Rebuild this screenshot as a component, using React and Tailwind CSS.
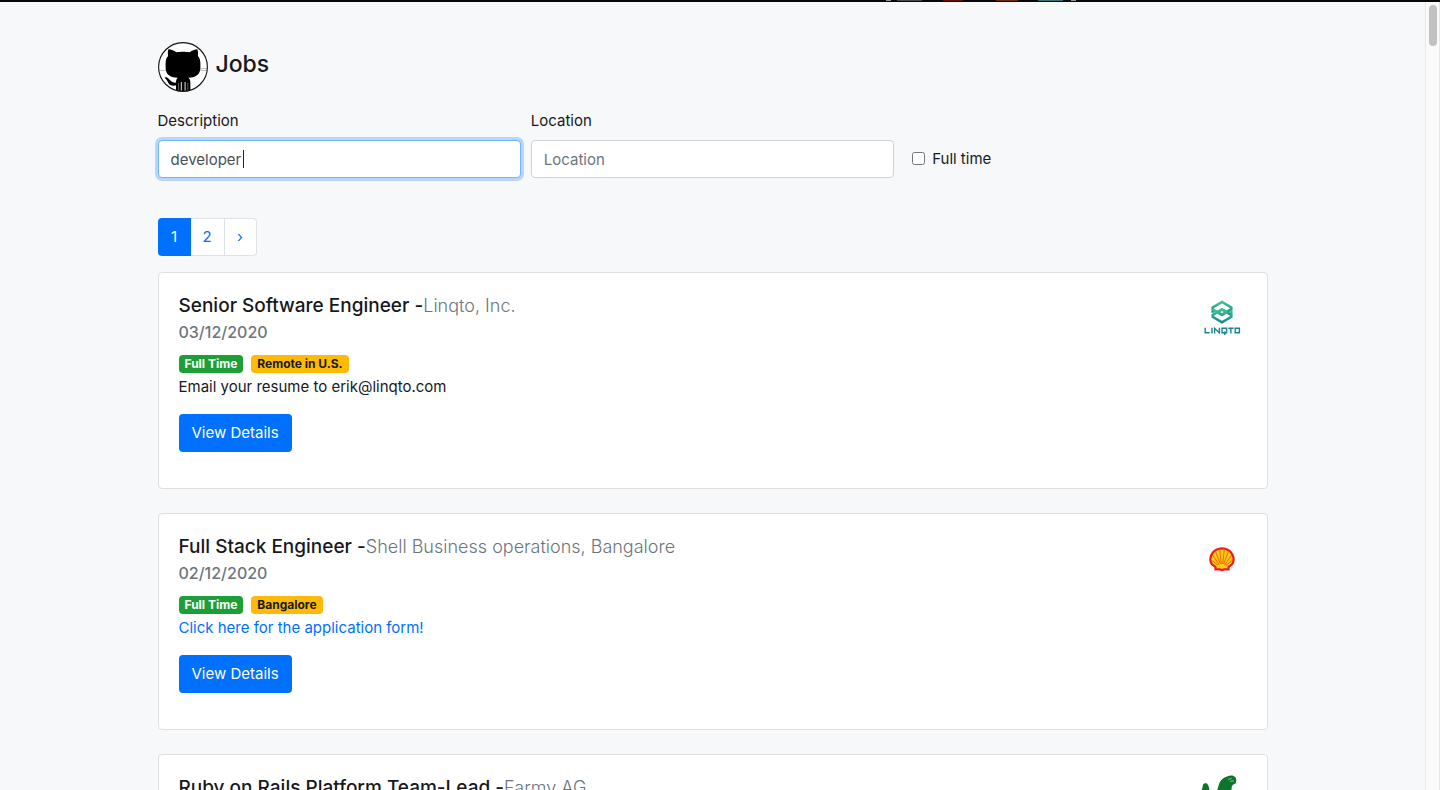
import { useState } from "react";

function OctocatLogo() {
  return (
    <svg viewBox="0 0 50 50" className="size-[50px] shrink-0" role="img" aria-label="GitHub">
      <defs>
        <clipPath id="octocat-clip">
          <circle cx="25" cy="25" r="24.5" />
        </clipPath>
      </defs>
      <circle cx="25" cy="25" r="24.5" fill="#fff" />
      <g clipPath="url(#octocat-clip)">
        <path d="M1 28.5H10M40 28.5H49M42 26.8L49 26.4" stroke="#bbb" strokeWidth="0.9" fill="none" />
        <path
          d="M10.4 7.3C13 7.2 16 8.6 18.4 10.3C22 9.5 28 9.5 31.6 10.3C34 8.6 37 7.2 39.3 7.3C40.2 9.5 40.2 12 39.9 14C41.8 16 42.4 18.5 42.4 22V25C42.4 32 39 35.4 30.4 35.8C31.8 37 32.4 38.5 32.4 41V50H18V43.6C13.5 44.2 11.2 43 10.2 40.8C9.5 38.8 8.4 37.6 6.6 35.8C6.8 34.9 9 35 10.4 36.6C12.4 39 14.4 41 18 40.6C18 38.4 18.4 37 19.8 35.8C11 35.4 7.6 32 7.6 25V22C7.6 18.5 8.2 16 10.1 14C9.8 12 9.6 9.5 10.4 7.3Z"
          fill="#000"
        />
        <path d="M20.6 41V50M29.8 41V50" stroke="#888" strokeWidth="0.7" />
        <path d="M23.3 40V50M27.1 40V50" stroke="#fff" strokeWidth="0.9" />
      </g>
      <circle cx="25" cy="25" r="24.4" fill="none" stroke="#111" strokeWidth="1.1" />
    </svg>
  );
}

function LinqtoLogo() {
  return (
    <svg viewBox="0 0 50 50" className="size-[50px]" role="img" aria-label="Linqto">
      <defs>
        <linearGradient id="linqto-mark" x1="0" y1="0" x2="0" y2="1">
          <stop offset="0" stopColor="#3cc48e" />
          <stop offset="1" stopColor="#128a8c" />
        </linearGradient>
      </defs>
      <g fill="none" stroke="url(#linqto-mark)" strokeWidth="2.6" strokeLinejoin="miter">
        <path d="M15.7 19.8V14.4L25 8.9L34.3 14.4V16L25 21.8L20.6 19L25 16.4L34.3 21.8" />
        <path d="M34.3 17.2V23.8L25 29.3L15.7 23.8V22L25 16.4L29.4 19L25 21.8L15.7 16.4" />
      </g>
      <g fill="none" stroke="#19848f" strokeWidth="1.4">
        <path d="M8.2 34.7V39.8H12.7" />
        <path d="M15 34.7V40.5" />
        <path d="M17.6 40.5V35.3L22.4 39.8V34.7" />
        <path d="M25 35.3H29.6V39.8H25ZM27.8 38.4V42" />
        <path d="M31.2 35.3H36.6M33.9 35.3V40.5" />
        <path d="M38.2 35.3H42.4V39.8H38.2Z" />
      </g>
    </svg>
  );
}

function ShellLogo() {
  return (
    <svg viewBox="0 0 50 50" className="size-[50px]" role="img" aria-label="Shell">
      <path
        d="M25 13.2C30.5 13.2 36.2 16.6 37.5 23.2C38.2 26.5 37.4 29 35.7 31.3L32.6 33.5V36.5H27.8L25 37.2L22.2 36.5H17.4V33.5L14.3 31.3C12.6 29 11.8 26.5 12.5 23.2C13.8 16.6 19.5 13.2 25 13.2Z"
        fill="#ee1c1c"
      />
      <path
        d="M25 15.6C30 15.6 34.2 18.8 35.3 23.5C35.9 26.3 35.3 28 34 29.8L30.4 32.4V34.2H27.4L25 34.8L22.6 34.2H19.6V32.4L16 29.8C14.7 28 14.1 26.3 14.7 23.5C15.8 18.8 20 15.6 25 15.6Z"
        fill="#fccb12"
      />
      <path
        d="M24.3 30L22.6 15M25.7 30L27.4 15M23.4 30L18.4 17.2M26.6 30L31.6 17.2M22.4 31L15.5 21M27.6 31L34.5 21M21 31L14.6 26.4M29 31L35.4 26.4"
        stroke="#ee5a14"
        strokeWidth="0.9"
      />
    </svg>
  );
}

function FarmyLogo() {
  return (
    <svg viewBox="0 0 50 50" className="size-[50px]" role="img" aria-label="Farmy">
      <path
        d="M3 24C4 19 5 14 6 10C6.3 8.4 8.6 7.8 10 8.6C12 11 12.5 14 12.6 17C18 18 20 16 21 13C22 7 25 3 30 1.6C33 -.2 37 .2 38 2C39.4 3 39.6 6 38.6 8.4C36 9.2 34.8 10 34.6 13C34 19 36 26 39 32H10Z"
        fill="#0b7529"
      />
      <path d="M31 4.4L34.6 3.4M33 6.3L37 5.8" stroke="#a8d2b2" strokeWidth="0.8" />
    </svg>
  );
}

const jobs = [
  {
    title: "Senior Software Engineer",
    company: "Linqto, Inc.",
    date: "03/12/2020",
    place: "Remote in U.S.",
    apply: "Email your resume to erik@linqto.com",
    Logo: LinqtoLogo,
  },
  {
    title: "Full Stack Engineer",
    company: "Shell Business operations, Bangalore",
    date: "02/12/2020",
    place: "Bangalore",
    apply: "Click here for the application form!",
    link: true,
    Logo: ShellLogo,
  },
  {
    title: "Ruby on Rails Platform Team-Lead",
    company: "Farmy AG",
    date: "02/12/2020",
    place: "Zurich",
    apply: "Click here for the application form!",
    link: true,
    Logo: FarmyLogo,
  },
];

function JobCard({ job }) {
  const { Logo } = job;
  return (
    <article className="flex items-start justify-between rounded border border-[#dfdfdf] bg-white p-5">
      <div>
        <h2 className="text-[19px] leading-[26px] font-medium">
          {job.title} -<span className="text-lg leading-[26px] font-light text-[#6c757d]">{job.company}</span>
        </h2>
        <p className="text-base leading-[26px] font-medium text-[#6c757d]">{job.date}</p>
        <div className="mt-2.5 flex gap-2 text-xs leading-[18px] font-bold">
          <span className="rounded bg-[#1c9f36] px-1.5 text-white">Full Time</span>
          <span className="rounded bg-[#ffba08] px-1.5">{job.place}</span>
        </div>
        <p className="mt-0.5">
          {job.link ? (
            <a href="#apply" className="text-[#0070ff]">{job.apply}</a>
          ) : (
            job.apply
          )}
        </p>
        <button type="button" className="mt-[15px] mb-4 block h-[38px] rounded bg-[#0070ff] px-[13px] text-white">
          View Details
        </button>
      </div>
      <Logo />
    </article>
  );
}

export default function App() {
  const [description, setDescription] = useState("developer");
  const [location, setLocation] = useState("");
  const field =
    "block h-[38px] w-full rounded border bg-white px-3 text-[#495057] outline-none placeholder:text-[#6c757d]";
  return (
    <div className="flex h-screen flex-col overflow-hidden bg-[#f7f8fa] font-['Inter',sans-serif] text-[15px] leading-6 text-[#16191d]">
      <div className="flex h-0.5 shrink-0 bg-[#08080c]">
        <svg viewBox="0 0 1440 2" preserveAspectRatio="none" className="h-0.5 w-full" aria-hidden="true">
          <path d="M886 0.5H891M1071 0.5H1076" stroke="#999" />
          <path d="M897 0.5H922" stroke="#4a4a4a" />
          <path d="M943 0.5H963" stroke="#5c1608" />
          <path d="M996 0.5H1018" stroke="#6e280c" />
          <path d="M1038 0.5H1063" stroke="#3c6f76" />
        </svg>
      </div>
      <div className="flex min-h-0 flex-1">
        <main className="min-w-0 flex-1 overflow-hidden">
          <div className="mx-auto max-w-[1140px] px-[15px] pt-10">
            <header className="flex items-start gap-2">
              <OctocatLogo />
              <h1 className="mt-2 text-[23px] leading-7 font-medium">Jobs</h1>
            </header>
            <form className="mt-4 grid grid-cols-3 gap-2.5" onSubmit={(e) => e.preventDefault()}>
              <div>
                <label htmlFor="description" className="mb-1.5 block leading-[26px]">Description</label>
                <div className="relative">
                  <input
                    id="description"
                    type="text"
                    autoFocus
                    value={description}
                    onChange={(e) => setDescription(e.target.value)}
                    className={`${field} border-[#74b3ff] caret-transparent ring-3 ring-[#b8d6fa]`}
                  />
                  <div aria-hidden="true" className="pointer-events-none absolute inset-0 flex items-center gap-0.5 overflow-hidden px-[13px]">
                    <span className="invisible">{description}</span>
                    <span className="h-[18px] w-px bg-[#212529]" />
                  </div>
                </div>
              </div>
              <div>
                <label htmlFor="location" className="mb-1.5 block leading-[26px]">Location</label>
                <input
                  id="location"
                  type="text"
                  placeholder="Location"
                  value={location}
                  onChange={(e) => setLocation(e.target.value)}
                  className={`${field} border-[#ced4da]`}
                />
              </div>
              <div className="flex items-end pb-[7px] pl-2">
                <label className="flex items-center gap-[7px]">
                  <input type="checkbox" className="size-[13px]" />
                  <span className="pt-0.5">Full time</span>
                </label>
              </div>
            </form>
            <nav aria-label="Pages" className="mt-10 flex">
              <a href="#page-1" className="flex h-[38px] w-[33px] items-center justify-center rounded-l bg-[#0070ff] text-white">1</a>
              <a href="#page-2" className="flex h-[38px] w-[34px] items-center justify-center border-y border-r border-[#dee2e6] bg-white text-[#0070ff]">2</a>
              <a href="#next" aria-label="Next" className="flex h-[38px] w-8 items-center justify-center rounded-r border-y border-r border-[#dee2e6] bg-white text-[#0070ff]">›</a>
            </nav>
            <div className="mt-4 flex flex-col gap-6">
              {jobs.map((job) => (
                <JobCard key={job.title} job={job} />
              ))}
            </div>
          </div>
        </main>
        <div aria-hidden="true" className="w-[15px] shrink-0 border-x border-[#e8e8e8] bg-[#fafafa] pt-[3px]">
          <div className="mx-auto h-[41px] w-2 rounded-full bg-[#c1c1c1]" />
        </div>
      </div>
    </div>
  );
}
